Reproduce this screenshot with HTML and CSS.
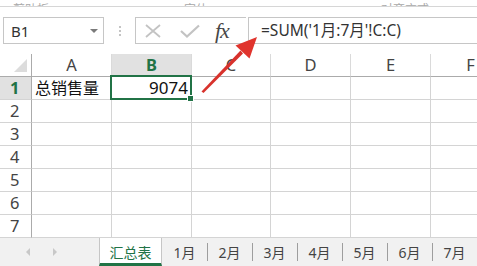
FILE: index.html
```html
<!DOCTYPE html>
<html lang="zh">
<head>
  <meta charset="UTF-8">
  <title>汇总表</title>
  <link rel="stylesheet" href="styles.css">
</head>
<body>
  <div class="ribbon-edge">
    <span class="rb-label" style="margin-left:13px">剪贴板</span>
    <span class="rb-label" style="margin-left:20px">◪</span>
    <span class="rb-label" style="margin-left:104px">字体</span>
    <span class="rb-label" style="margin-left:110px">◪</span>
    <span class="rb-label" style="margin-left:52px">对齐方式</span>
  </div>

  <div class="formula-row">
    <div class="name-box">
      <span>B1</span>
      <span class="drop"></span>
    </div>
    <div class="dots"><i></i><i></i><i></i></div>
    <div class="fx-box">
      <svg class="ico" width="20" height="14" viewBox="0 0 20 14">
        <path d="M3 1 L17 13 M17 1 L3 13" stroke="#c3c3c3" stroke-width="1.8" fill="none"/>
      </svg>
      <svg class="ico" width="22" height="14" viewBox="0 0 22 14">
        <path d="M2 7 L8 12.5 L20 1.5" stroke="#c3c3c3" stroke-width="2.2" fill="none"/>
      </svg>
      <span class="fx">fx</span>
    </div>
    <div class="formula-input">=SUM('1月:7月'!C:C)</div>
  </div>

  <div class="sheet">
    <div class="corner"><span class="tri"></span></div>
    <div class="col-h">A</div>
    <div class="col-h active">B</div>
    <div class="col-h">C</div>
    <div class="col-h">D</div>
    <div class="col-h">E</div>
    <div class="col-h">F</div>

    <div class="row-h active">1</div>
    <div class="cell">总销售量</div>
    <div class="cell num selected">9074<span class="handle"></span></div>
    <div class="cell"></div><div class="cell"></div><div class="cell"></div><div class="cell"></div>

    <div class="row-h">2</div>
    <div class="cell"></div><div class="cell"></div><div class="cell"></div><div class="cell"></div><div class="cell"></div><div class="cell"></div>
    <div class="row-h">3</div>
    <div class="cell"></div><div class="cell"></div><div class="cell"></div><div class="cell"></div><div class="cell"></div><div class="cell"></div>
    <div class="row-h">4</div>
    <div class="cell"></div><div class="cell"></div><div class="cell"></div><div class="cell"></div><div class="cell"></div><div class="cell"></div>
    <div class="row-h">5</div>
    <div class="cell"></div><div class="cell"></div><div class="cell"></div><div class="cell"></div><div class="cell"></div><div class="cell"></div>
    <div class="row-h">6</div>
    <div class="cell"></div><div class="cell"></div><div class="cell"></div><div class="cell"></div><div class="cell"></div><div class="cell"></div>
    <div class="row-h">7</div>
    <div class="cell"></div><div class="cell"></div><div class="cell"></div><div class="cell"></div><div class="cell"></div><div class="cell"></div>
  </div>

  <div class="tab-bar">
    <div class="tab-nav">
      <span class="nav-l"></span>
      <span class="nav-r"></span>
    </div>
    <div class="tab active">汇总表</div>
    <div class="tab">1月</div>
    <div class="tab">2月</div>
    <div class="tab">3月</div>
    <div class="tab">4月</div>
    <div class="tab">5月</div>
    <div class="tab">6月</div>
    <div class="tab">7月</div>
  </div>

  <svg class="arrow" width="477" height="266" viewBox="0 0 477 266">
    <path d="M201.5 91.5 L203.5 93 L243 53.5 L240.5 50.5 Z" fill="#d8322c"/>
    <path d="M257 37 L235.5 45.5 L249.5 58.5 Z" fill="#e0342d"/>
  </svg>
</body>
</html>
```

FILE: styles.css
```css
body {
  margin: 0;
  width: 477px;
  height: 266px;
  overflow: hidden;
  position: relative;
  background: #fff;
  font-family: "Noto Sans", "Noto Sans CJK SC", sans-serif;
  color: #333;
}

.ribbon-edge {
  height: 6px;
  border-bottom: 1px solid #d6d6d6;
  overflow: hidden;
  display: flex;
  align-items: flex-end;
}
.rb-label {
  font-size: 12px;
  line-height: 12px;
  color: #a8a8a8;
  margin-bottom: -10px;
}

.formula-row {
  display: flex;
  align-items: stretch;
  height: 27px;
  margin-top: 10px;
  overflow: hidden;
}
.name-box {
  width: 101px;
  margin-left: 3px;
  box-sizing: border-box;
  border: 1px solid #c6c6c6;
  display: flex;
  align-items: center;
  justify-content: space-between;
  padding: 0 5px 0 7px;
  font-size: 15px;
  color: #333;
}
.drop {
  width: 0;
  height: 0;
  border-left: 4px solid transparent;
  border-right: 4px solid transparent;
  border-top: 4px solid #7a7a7a;
}
.dots {
  width: 31px;
  display: flex;
  flex-direction: column;
  align-items: center;
  justify-content: center;
  gap: 2px;
}
.dots i {
  width: 2px;
  height: 2px;
  background: #c4c4c4;
}
.fx-box {
  width: 111px;
  box-sizing: border-box;
  border: 1px solid #c6c6c6;
  border-right: none;
  display: flex;
  align-items: center;
  padding-left: 7px;
  gap: 16px;
}
.fx {
  font-family: "Liberation Serif", serif;
  font-style: italic;
  font-size: 22px;
  color: #474747;
  margin-left: -2px;
  letter-spacing: -1px;
}
.formula-input {
  flex: 1;
  border: 1px solid #c6c6c6;
  border-right: none;
  margin-left: 2px;
  padding-left: 12px;
  font-size: 15.5px;
  line-height: 25px;
  color: #333;
  white-space: nowrap;
}

.sheet {
  margin-top: 10px;
  display: grid;
  grid-template-columns: 32px 80px 80px 79px 80px 80px 80px;
  grid-template-rows: repeat(8, 23px);
  width: 477px;
  overflow: hidden;
}
.corner {
  border-right: 1px solid #ababab;
  border-bottom: 1px solid #ababab;
  position: relative;
}
.tri {
  position: absolute;
  right: 4px;
  bottom: 4px;
  width: 0;
  height: 0;
  border-left: 13px solid transparent;
  border-bottom: 13px solid #dcdcdc;
}
.col-h {
  border-bottom: 1px solid #ababab;
  border-right: 1px solid #dadada;
  text-align: center;
  font-size: 16.5px;
  line-height: 22px;
  color: #444;
}
.col-h.active {
  background: #e1e1e1;
  color: #217346;
  font-weight: bold;
  border-bottom: 2px solid #217346;
}
.row-h {
  border-right: 1px solid #ababab;
  border-bottom: 1px solid #d4d4d4;
  font-size: 16.5px;
  line-height: 22px;
  padding-left: 10px;
  color: #444;
}
.row-h.active {
  background: #e1e1e1;
  color: #217346;
  font-weight: bold;
}
.cell {
  border-right: 1px solid #d4d4d4;
  border-bottom: 1px solid #d4d4d4;
  font-size: 16px;
  line-height: 22px;
  padding: 0 3px;
  color: #111;
  white-space: nowrap;
  position: relative;
}
.cell.num {
  text-align: right;
  font-size: 17px;
}
.cell.selected::after {
  content: "";
  position: absolute;
  left: -2px;
  top: -2px;
  right: -1px;
  bottom: -1px;
  border: 2px solid #217346;
}
.handle {
  position: absolute;
  right: -3px;
  bottom: -3px;
  width: 5px;
  height: 5px;
  background: #217346;
  border: 1px solid #fff;
  z-index: 1;
}

.tab-bar {
  height: 28px;
  background: #f1f1f1;
  display: flex;
  align-items: stretch;
  overflow: hidden;
}
.tab-nav {
  width: 99px;
  display: flex;
  align-items: center;
  padding-left: 26px;
  box-sizing: border-box;
  gap: 23px;
}
.nav-l, .nav-r {
  width: 0;
  height: 0;
  border-top: 4px solid transparent;
  border-bottom: 4px solid transparent;
}
.nav-l { border-right: 4px solid #c8c8c8; }
.nav-r { border-left: 4px solid #c8c8c8; }
.tab {
  width: 45px;
  flex: none;
  font-size: 14px;
  color: #444;
  display: flex;
  align-items: center;
  justify-content: center;
  position: relative;
}
.tab + .tab::before {
  content: "";
  position: absolute;
  left: 0;
  top: 5px;
  bottom: 5px;
  width: 1px;
  background: #9e9e9e;
}
.tab.active {
  width: 63px;
  background: #fff;
  color: #217346;
  box-sizing: border-box;
  border-left: 1px solid #c6c6c6;
  border-right: 1px solid #c6c6c6;
  border-bottom: 3px solid #217346;
  padding-top: 2px;
}
.tab.active + .tab::before { display: none; }

.arrow {
  position: absolute;
  left: 0;
  top: 0;
  pointer-events: none;
}
```
